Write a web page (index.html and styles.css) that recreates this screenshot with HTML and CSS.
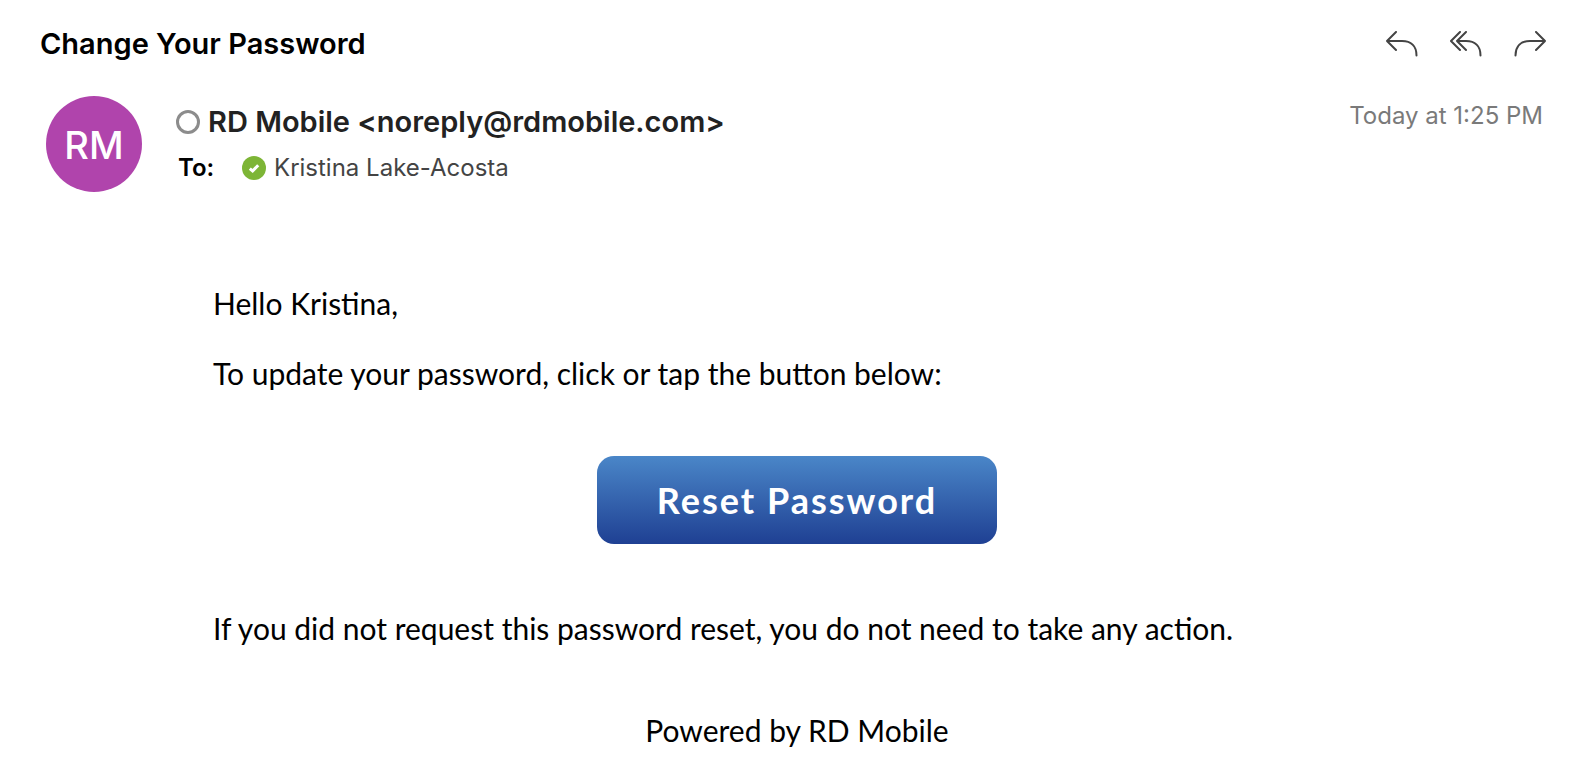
FILE: index.html
```html
<!DOCTYPE html>
<html lang="en">
<head>
    <meta charset="UTF-8">
    <meta name="viewport" content="width=device-width, initial-scale=1.0">
    <title>Change Your Password</title>
    <link rel="stylesheet" href="styles.css">
</head>
<body>

<header class="subject-bar">
    <h1>Change Your Password</h1>
    <div class="actions">
        <button type="button" class="action" aria-label="Reply">
            <svg width="32" height="26" viewBox="0 0 32 26">
                <path d="M10 1 L1 10 L10 19 M1 10 H16 C25 10 30.5 15 30.5 24.5"/>
            </svg>
        </button>
        <button type="button" class="action" aria-label="Reply all">
            <svg width="32" height="26" viewBox="0 0 32 26">
                <path d="M10 1 L1 10 L10 19 M16 1 L7 10 L16 19 M7 10 H16 C25 10 30.5 15 30.5 24.5"/>
            </svg>
        </button>
        <button type="button" class="action" aria-label="Forward">
            <svg width="32" height="26" viewBox="0 0 32 26">
                <path d="M22 1 L31 10 L22 19 M31 10 H16 C7 10 1.5 15 1.5 24.5"/>
            </svg>
        </button>
    </div>
</header>

<section class="sender">
    <div class="avatar">RM</div>
    <div class="people">
        <div class="from">
            <span class="status"></span>
            <span>RD Mobile &lt;noreply@rdmobile.com&gt;</span>
        </div>
        <div class="to">
            <span class="to-label">To:</span>
            <svg class="check" width="24" height="24" viewBox="0 0 24 24">
                <circle cx="12" cy="12" r="12"/>
                <path d="M7.8 12.6 L10.6 15 L16.2 9.2"/>
            </svg>
            <span>Kristina Lake-Acosta</span>
        </div>
    </div>
    <time class="date">Today at 1:25 PM</time>
</section>

<main class="message">
    <p>Hello Kristina,</p>
    <p>To update your password, click or tap the button below:</p>
    <button type="button" class="reset-button">Reset Password</button>
    <p>If you did not request this password reset, you do not need to take any action.</p>
    <footer>Powered by RD Mobile</footer>
</main>

</body>
</html>
```

FILE: styles.css
```css
body {
    font-family: Inter, "Liberation Sans", sans-serif;
    background-color: #fff;
    color: #000;
    margin: 0;
}

.subject-bar {
    display: flex;
    justify-content: space-between;
    align-items: center;
    padding: 24px 32px 0 40px;
}

h1 {
    margin: 0;
    font-size: 29px;
    line-height: 40px;
    font-weight: 600;
}

.actions {
    display: flex;
    gap: 32px;
}

.action {
    display: flex;
    padding: 0;
    border: none;
    background: none;
    cursor: pointer;
}

.action path {
    fill: none;
    stroke: #444;
    stroke-width: 2;
    stroke-linecap: round;
    stroke-linejoin: round;
}

.sender {
    display: flex;
    align-items: flex-start;
    padding: 32px 35px 0 46px;
}

.avatar {
    width: 96px;
    height: 96px;
    border-radius: 50%;
    background-color: #b044ac;
    color: #fff;
    font-size: 38px;
    font-weight: 500;
    line-height: 98px;
    text-align: center;
}

.people {
    flex: 1;
    margin-left: 34px;
    padding-top: 6px;
}

.from {
    display: flex;
    align-items: center;
    gap: 8px;
    color: #222;
    font-size: 29px;
    line-height: 40px;
    font-weight: 600;
}

.status {
    box-sizing: border-box;
    width: 24px;
    height: 24px;
    border: 3px solid #8c8c8c;
    border-radius: 50%;
}

.to {
    display: flex;
    align-items: center;
    gap: 8px;
    margin-top: 10px;
    color: #444;
    font-size: 24px;
    line-height: 32px;
}

.to-label {
    width: 56px;
    padding-left: 2px;
    color: #000;
    font-weight: 600;
}

.check circle {
    fill: #7db536;
}

.check path {
    fill: none;
    stroke: #fff;
    stroke-width: 3;
}

.date {
    padding-top: 4px;
    color: #7a7a7a;
    font-size: 24px;
    line-height: 32px;
}

.message {
    margin: 91px 197px 0 213px;
    font-family: Lato, "Liberation Sans", sans-serif;
    font-size: 30px;
    line-height: 40px;
}

.message p {
    margin: 0 0 30px;
}

.reset-button {
    display: block;
    width: 400px;
    height: 88px;
    margin: 63px auto 64px;
    border: none;
    border-radius: 17px;
    background: linear-gradient(#4a86c8, #1f4093);
    color: #fff;
    font-family: inherit;
    font-size: 36px;
    font-weight: 700;
    letter-spacing: 2px;
    cursor: pointer;
}

footer {
    margin-top: 62px;
    text-align: center;
}
```
